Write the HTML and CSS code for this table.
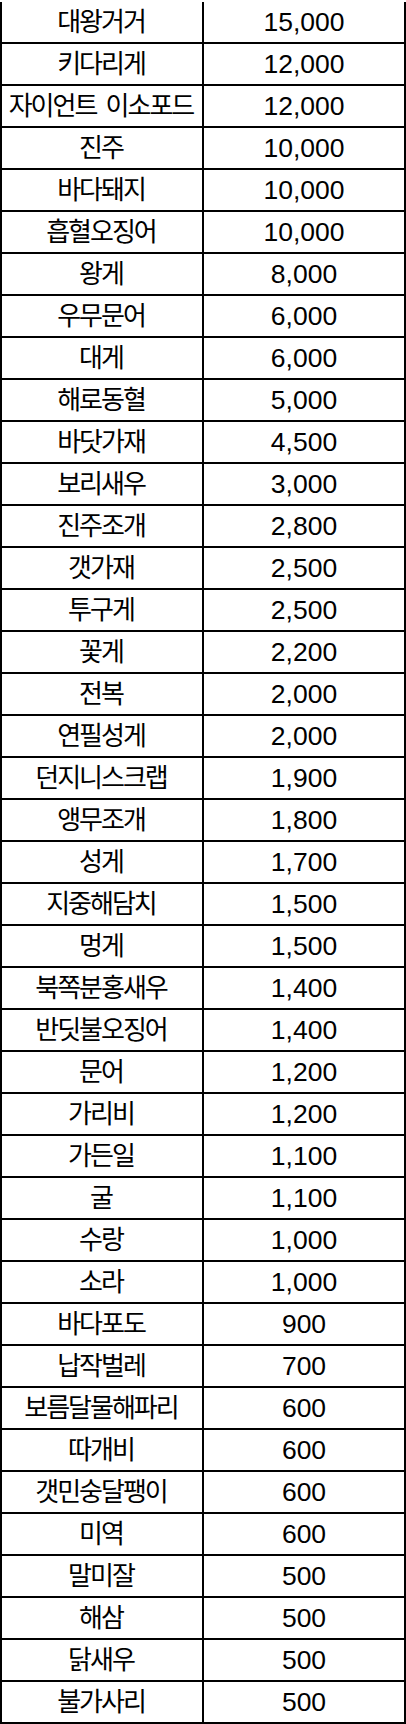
FILE: index.html
```html
<!DOCTYPE html>
<html lang="ko">
<head>
<meta charset="utf-8">
<title>가격표</title>
<link rel="stylesheet" href="styles.css">
</head>
<body>
<table class="price-table">
<tbody>
<tr><td>대왕거거</td><td>15,000</td></tr>
<tr><td>키다리게</td><td>12,000</td></tr>
<tr><td>자이언트 이소포드</td><td>12,000</td></tr>
<tr><td>진주</td><td>10,000</td></tr>
<tr><td>바다돼지</td><td>10,000</td></tr>
<tr><td>흡혈오징어</td><td>10,000</td></tr>
<tr><td>왕게</td><td>8,000</td></tr>
<tr><td>우무문어</td><td>6,000</td></tr>
<tr><td>대게</td><td>6,000</td></tr>
<tr><td>해로동혈</td><td>5,000</td></tr>
<tr><td>바닷가재</td><td>4,500</td></tr>
<tr><td>보리새우</td><td>3,000</td></tr>
<tr><td>진주조개</td><td>2,800</td></tr>
<tr><td>갯가재</td><td>2,500</td></tr>
<tr><td>투구게</td><td>2,500</td></tr>
<tr><td>꽃게</td><td>2,200</td></tr>
<tr><td>전복</td><td>2,000</td></tr>
<tr><td>연필성게</td><td>2,000</td></tr>
<tr><td>던지니스크랩</td><td>1,900</td></tr>
<tr><td>앵무조개</td><td>1,800</td></tr>
<tr><td>성게</td><td>1,700</td></tr>
<tr><td>지중해담치</td><td>1,500</td></tr>
<tr><td>멍게</td><td>1,500</td></tr>
<tr><td>북쪽분홍새우</td><td>1,400</td></tr>
<tr><td>반딧불오징어</td><td>1,400</td></tr>
<tr><td>문어</td><td>1,200</td></tr>
<tr><td>가리비</td><td>1,200</td></tr>
<tr><td>가든일</td><td>1,100</td></tr>
<tr><td>굴</td><td>1,100</td></tr>
<tr><td>수랑</td><td>1,000</td></tr>
<tr><td>소라</td><td>1,000</td></tr>
<tr><td>바다포도</td><td>900</td></tr>
<tr><td>납작벌레</td><td>700</td></tr>
<tr><td>보름달물해파리</td><td>600</td></tr>
<tr><td>따개비</td><td>600</td></tr>
<tr><td>갯민숭달팽이</td><td>600</td></tr>
<tr><td>미역</td><td>600</td></tr>
<tr><td>말미잘</td><td>500</td></tr>
<tr><td>해삼</td><td>500</td></tr>
<tr><td>닭새우</td><td>500</td></tr>
<tr><td>불가사리</td><td>500</td></tr>
</tbody>
</table>
</body>
</html>
```

FILE: styles.css
```css
html, body {
  margin: 0;
  padding: 0;
  background: #ffffff;
}

body {
  padding-top: 2px;
  font-family: "Liberation Sans", "Noto Sans CJK KR", sans-serif;
  color: #000000;
}

.price-table {
  border-collapse: separate;
  border-spacing: 0;
  border-left: 2px solid #000000;
}

.price-table td {
  box-sizing: content-box;
  width: 200px;
  height: 40px;
  padding: 0;
  border-right: 2px solid #000000;
  border-bottom: 2px solid #000000;
  text-align: center;
  vertical-align: middle;
  line-height: 40px;
  white-space: nowrap;
  overflow: hidden;
}

.price-table td:first-child {
  font-size: 26px;
  letter-spacing: -2px;
  word-spacing: 4px;
  text-indent: -2px;
}

.price-table td:last-child {
  font-size: 26.5px;
}
```
